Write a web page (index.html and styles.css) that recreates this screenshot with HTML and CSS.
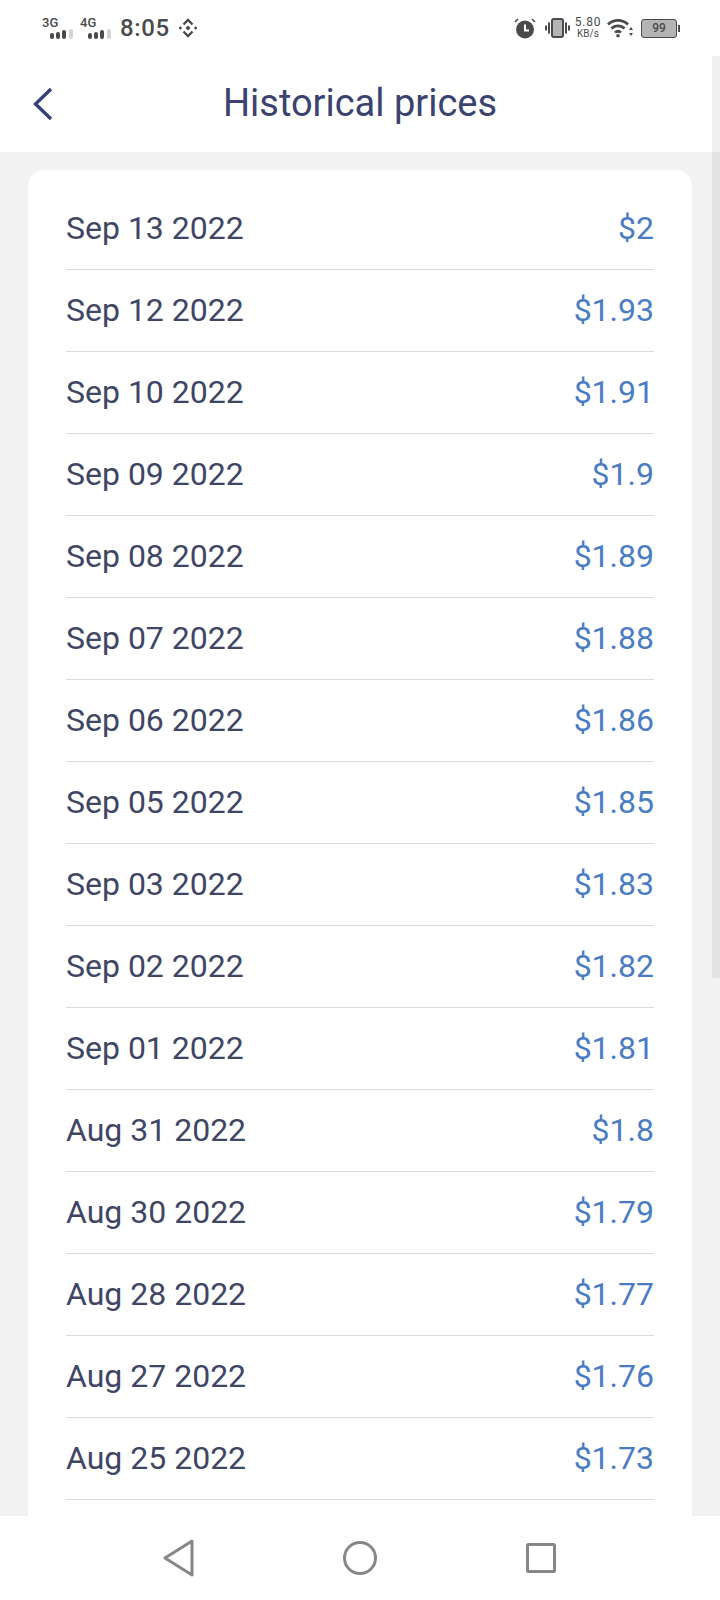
FILE: index.html
```html
<!DOCTYPE html>
<html lang="en">
<head>
    <meta charset="UTF-8">
    <meta name="viewport" content="width=device-width, initial-scale=1.0">
    <title>Historical prices</title>
    <link rel="stylesheet" href="styles.css">
</head>
<body>
    <div class="phone">
        <div class="status-bar">
            <div class="status-left">
                <div class="signal">
                    <span class="signal-label">3G</span>
                    <svg class="signal-bars" width="24" height="10" viewBox="0 0 24 10"><rect x="0" y="4" width="4" height="6" rx="2" fill="#4a4a4a"/><rect x="6" y="3" width="4" height="7" rx="2" fill="#4a4a4a"/><rect x="12" y="1" width="4" height="9" rx="2" fill="#4a4a4a"/><rect x="19" y="0" width="4" height="10" rx="2" fill="#d4d4d4"/></svg>
                </div>
                <div class="signal">
                    <span class="signal-label">4G</span>
                    <svg class="signal-bars" width="24" height="10" viewBox="0 0 24 10"><rect x="0" y="4" width="4" height="6" rx="2" fill="#4a4a4a"/><rect x="6" y="3" width="4" height="7" rx="2" fill="#4a4a4a"/><rect x="12" y="1" width="4" height="9" rx="2" fill="#4a4a4a"/><rect x="19" y="0" width="4" height="10" rx="2" fill="#d4d4d4"/></svg>
                </div>
                <span class="clock">8:05</span>
                <svg class="binance" width="20" height="20" viewBox="0 0 20 20" fill="none" stroke="#4a4a4a" stroke-width="2.400"><path d="M5.500 6.500 10 2l4.500 4.500"/><path d="M5.500 13.500 10 18l4.500-4.500"/><path d="M7.500 10 10 7.500l2.500 2.500-2.500 2.500z" fill="#4a4a4a" stroke="none"/><path d="M0.500 10l1.800-1.800L4.100 10l-1.800 1.800zM15.900 10l1.800-1.800 1.800 1.800-1.800 1.800z" fill="#4a4a4a" stroke="none"/></svg>
            </div>
            <div class="status-right">
                <svg class="alarm" width="22" height="22" viewBox="0 0 22 22"><path d="M1 5 4 2M21 5 18 2" stroke="#4a4a4a" stroke-width="1.600"/><circle cx="11" cy="12.500" r="9" fill="#4a4a4a"/><path d="M11 7.500v6h4" fill="none" stroke="#fff" stroke-width="2"/></svg>
                <svg class="vibrate" width="25" height="20" viewBox="0 0 25 20"><rect x="7" y="1" width="11" height="18" rx="2" fill="#b4b4b4" stroke="#4a4a4a" stroke-width="2"/><path d="M4 4.500v11M1 7.500v5M21 4.500v11M24 7.500v5" stroke="#4a4a4a" stroke-width="2"/></svg>
                <div class="speed">
                    <span class="speed-value">5.80</span>
                    <span class="speed-unit">KB/s</span>
                </div>
                <svg class="wifi" width="26" height="20" viewBox="0 0 26 20" fill="none" stroke="#4a4a4a" stroke-width="2.800"><path d="M1 6.500C6.500 1 15.500 1 21 6.500"/><path d="M4.500 10.500c3.500-3.500 9.500-3.500 13 0"/><path d="M8 14.500c1.800-1.500 4.200-1.500 6 0"/><circle cx="11" cy="17.800" r="1.800" fill="#4a4a4a" stroke="none"/><path d="M22 12h4l-2-3zM22 15h4l-2 3z" fill="#4a4a4a" stroke="none"/></svg>
                <div class="battery">
                    <div class="battery-body">99</div>
                    <div class="battery-tip"></div>
                </div>
            </div>
        </div>

        <div class="title-bar">
            <svg class="back" width="22" height="32" viewBox="0 0 22 32" fill="none" stroke="#354079" stroke-width="3.400"><path d="M20 1 4.500 16 20 31"/></svg>
            <h1>Historical prices</h1>
        </div>

        <div class="content">
            <div class="card">
                <div class="row"><span class="date">Sep 13 2022</span><span class="price">$2</span></div>
                <div class="row"><span class="date">Sep 12 2022</span><span class="price">$1.93</span></div>
                <div class="row"><span class="date">Sep 10 2022</span><span class="price">$1.91</span></div>
                <div class="row"><span class="date">Sep 09 2022</span><span class="price">$1.9</span></div>
                <div class="row"><span class="date">Sep 08 2022</span><span class="price">$1.89</span></div>
                <div class="row"><span class="date">Sep 07 2022</span><span class="price">$1.88</span></div>
                <div class="row"><span class="date">Sep 06 2022</span><span class="price">$1.86</span></div>
                <div class="row"><span class="date">Sep 05 2022</span><span class="price">$1.85</span></div>
                <div class="row"><span class="date">Sep 03 2022</span><span class="price">$1.83</span></div>
                <div class="row"><span class="date">Sep 02 2022</span><span class="price">$1.82</span></div>
                <div class="row"><span class="date">Sep 01 2022</span><span class="price">$1.81</span></div>
                <div class="row"><span class="date">Aug 31 2022</span><span class="price">$1.8</span></div>
                <div class="row"><span class="date">Aug 30 2022</span><span class="price">$1.79</span></div>
                <div class="row"><span class="date">Aug 28 2022</span><span class="price">$1.77</span></div>
                <div class="row"><span class="date">Aug 27 2022</span><span class="price">$1.76</span></div>
                <div class="row"><span class="date">Aug 25 2022</span><span class="price">$1.73</span></div>
            </div>
        </div>

        <div class="nav-bar">
            <svg width="32" height="38" viewBox="0 0 32 38" fill="none" stroke="#878787" stroke-width="3" stroke-linejoin="round"><path d="M30 2 3 19l27 17z"/></svg>
            <svg width="34" height="34" viewBox="0 0 34 34" fill="none" stroke="#878787" stroke-width="3"><circle cx="17" cy="17" r="15.500"/></svg>
            <svg width="30" height="30" viewBox="0 0 30 30" fill="none" stroke="#878787" stroke-width="3" stroke-linejoin="round"><rect x="1.500" y="1.500" width="27" height="27" rx="1"/></svg>
        </div>

        <div class="scrollbar"></div>
    </div>
</body>
</html>
```

FILE: styles.css
```css
body {
    margin: 0;
    font-family: 'Roboto', sans-serif;
    background: #fff;
}

.phone {
    position: relative;
    width: 720px;
    height: 1600px;
    display: flex;
    flex-direction: column;
    overflow: hidden;
    background: #f2f2f2;
}

.status-bar {
    height: 56px;
    flex-shrink: 0;
    display: flex;
    justify-content: space-between;
    align-items: center;
    padding: 0 40px 0 42px;
    background: #fff;
    color: #4a4a4a;
}

.status-left {
    display: flex;
    align-items: center;
}

.status-right {
    display: flex;
    align-items: center;
}

.signal {
    width: 38px;
    height: 22px;
    position: relative;
}

.signal-label {
    position: absolute;
    left: 0;
    top: -1px;
    font-size: 13px;
    font-weight: 500;
    line-height: 14px;
}

.signal-bars {
    position: absolute;
    left: 8px;
    bottom: 0;
}

.clock {
    margin-left: 2px;
    font-size: 24px;
    font-weight: 500;
    letter-spacing: 0.6px;
}

.binance {
    margin-left: 8px;
}

.vibrate {
    margin-left: 9px;
}

.speed {
    display: flex;
    flex-direction: column;
    align-items: center;
    width: 26px;
    margin-left: 5px;
    line-height: 11px;
}

.speed-value {
    font-size: 12px;
    letter-spacing: 0.8px;
}

.speed-unit {
    font-size: 10px;
}

.wifi {
    margin-left: 6px;
}

.battery {
    display: flex;
    align-items: center;
    margin-left: 8px;
}

.battery-body {
    width: 34px;
    height: 17px;
    border: 1.500px solid #4a4a4a;
    border-radius: 3px;
    background: #b4b4b4;
    font-size: 12px;
    font-weight: 500;
    line-height: 17px;
    text-align: center;
}

.battery-tip {
    width: 2px;
    height: 7px;
    margin-left: 1px;
    background: #4a4a4a;
}

.title-bar {
    height: 94px;
    padding-bottom: 2px;
    flex-shrink: 0;
    position: relative;
    display: flex;
    align-items: center;
    justify-content: center;
    background: #fff;
}

.back {
    position: absolute;
    left: 31px;
    top: 32px;
}

.title-bar h1 {
    margin: 0;
    font-size: 38px;
    font-weight: 400;
    color: #3a4370;
}

.content {
    flex: 1;
    min-height: 0;
    overflow: hidden;
    padding: 18px 28px 0;
}

.card {
    background: #fff;
    border-radius: 16px;
    padding: 18px 38px 60px;
}

.row {
    height: 79px;
    padding-bottom: 2px;
    display: flex;
    justify-content: space-between;
    align-items: center;
    border-bottom: 1px solid #dcdcdc;
    font-size: 32px;
}

.date {
    color: #3f4665;
}

.price {
    color: #4a7cc4;
}

.nav-bar {
    height: 84px;
    flex-shrink: 0;
    display: flex;
    align-items: center;
    gap: 149px;
    padding-left: 162px;
    background: #fff;
}

.scrollbar {
    position: absolute;
    top: 56px;
    right: 0;
    width: 8px;
    height: 922px;
    background: rgba(0, 0, 0, 0.06);
}
```
